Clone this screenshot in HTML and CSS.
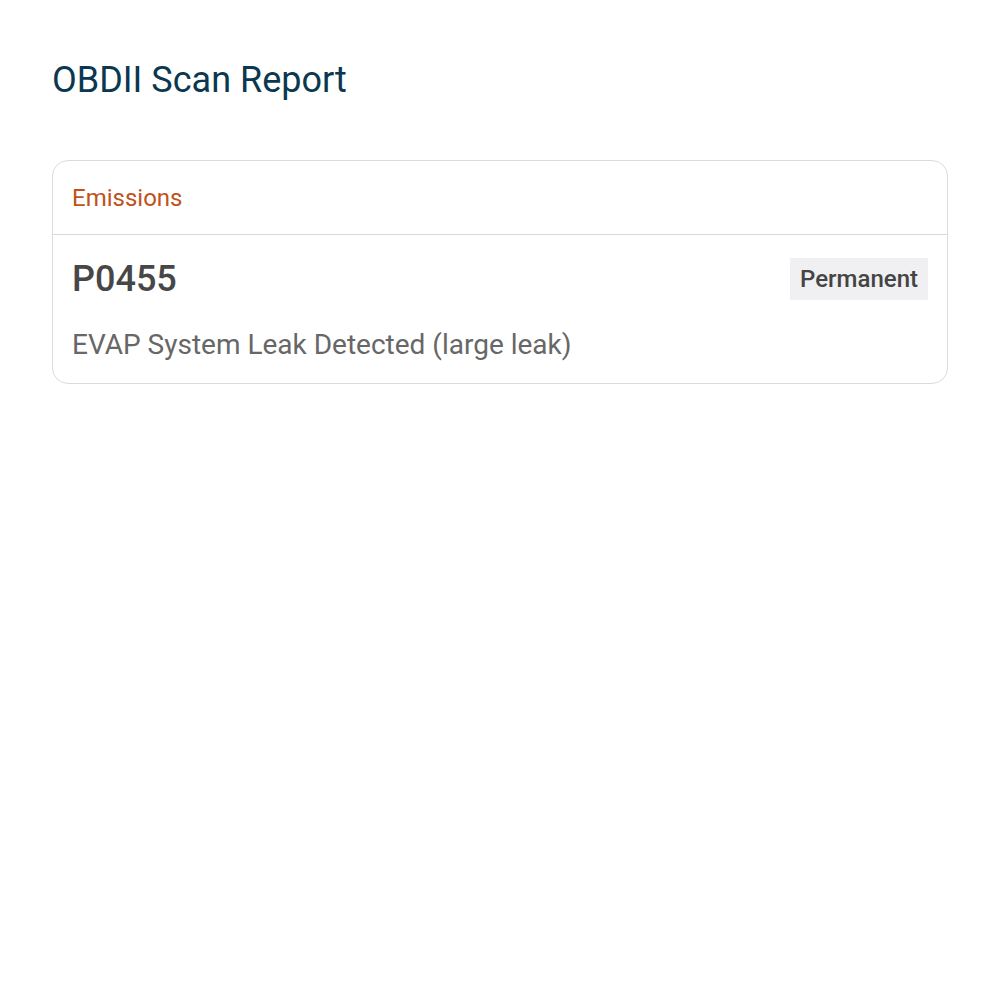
FILE: index.html
```html
<!DOCTYPE html>
<html lang="en">
<head>
<meta charset="utf-8">
<title>OBDII Scan Report</title>
<link rel="stylesheet" href="styles.css">
</head>
<body>
<main class="report">
  <h1 class="report-title">OBDII Scan Report</h1>
  <section class="card">
    <header class="card-header">Emissions</header>
    <div class="card-body">
      <div class="code-row">
        <span class="code">P0455</span>
        <span class="badge">Permanent</span>
      </div>
      <p class="desc">EVAP System Leak Detected (large leak)</p>
    </div>
  </section>
</main>
</body>
</html>
```
FILE: styles.css
```css
* { box-sizing: border-box; }
body {
  margin: 0;
  background: #fff;
  font-family: Roboto, "Noto Sans", sans-serif;
}
.report {
  padding: 56px 52px;
}
.report-title {
  margin: 0 0 56px;
  font-size: 36px;
  font-weight: 400;
  line-height: 48px;
  color: #0b3850;
}
.card {
  border: 1px solid #dcdcdc;
  border-radius: 16px;
}
.card-header {
  height: 74px;
  padding: 0 19px;
  display: flex;
  align-items: center;
  font-size: 24px;
  color: #c0521a;
  border-bottom: 1px solid #d8d8d8;
}
.card-body {
  padding: 23px 19px 21px;
}
.code-row {
  display: flex;
  align-items: center;
  justify-content: space-between;
}
.code {
  font-size: 36px;
  font-weight: 500;
  color: #474747;
}
.badge {
  background: #f0f0f3;
  padding: 0 10px;
  height: 42px;
  line-height: 42px;
  font-size: 24px;
  font-weight: 500;
  color: #444;
}
.desc {
  margin: 28px 0 0;
  font-size: 28px;
  line-height: 34px;
  color: #676767;
}
```
